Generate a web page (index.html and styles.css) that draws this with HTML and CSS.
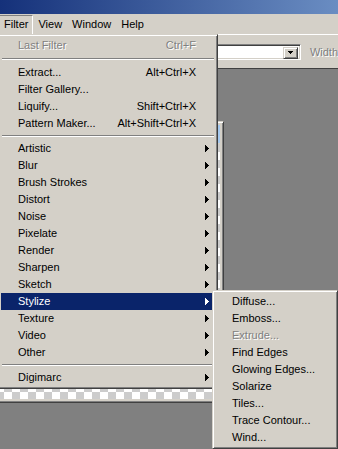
FILE: index.html
```html
<!DOCTYPE html>
<html lang="en">
<head>
  <meta charset="UTF-8">
  <meta name="viewport" content="width=device-width, initial-scale=1.0">
  <title>Filter menu</title>
  <link rel="stylesheet" href="styles.css">
</head>
<body>

  <div class="titlebar"></div>

  <!-- main menu bar -->
  <div class="menubar">
    <span class="mb-item open">Filter</span>
    <span class="mb-item">View</span>
    <span class="mb-item">Window</span>
    <span class="mb-item">Help</span>
  </div>

  <!-- tool options bar -->
  <div class="options">
    <div class="combo">
      <div class="combo-btn">
        <svg width="5" height="3" viewBox="0 0 5 3"><rect x="0" y="0" width="5" height="1"/><rect x="1" y="1" width="3" height="1"/><rect x="2" y="2" width="1" height="1"/></svg>
      </div>
    </div>
    <span class="opt-label">Width</span>
  </div>

  <div class="workspace">
    <div class="docwin">
      <div class="doc-title"></div>
      <div class="doc-canvas"></div>
    </div>
  </div>

  <!-- Filter dropdown -->
  <div class="menu filter-menu">
    <div class="item disabled"><span>Last Filter</span><span class="shortcut">Ctrl+F</span><span class="sub"></span></div>
    <div class="sep first"><div class="line"></div></div>
    <div class="item"><span>Extract...</span><span class="shortcut">Alt+Ctrl+X</span><span class="sub"></span></div>
    <div class="item"><span>Filter Gallery...</span><span class="sub"></span></div>
    <div class="item"><span>Liquify...</span><span class="shortcut">Shift+Ctrl+X</span><span class="sub"></span></div>
    <div class="item"><span>Pattern Maker...</span><span class="shortcut">Alt+Shift+Ctrl+X</span><span class="sub"></span></div>
    <div class="sep"><div class="line"></div></div>
    <div class="item"><span>Artistic</span><span class="sub"><svg class="arrow" width="4" height="7" viewBox="0 0 4 7"><rect x="0" y="0" width="1" height="7"/><rect x="1" y="1" width="1" height="5"/><rect x="2" y="2" width="1" height="3"/><rect x="3" y="3" width="1" height="1"/></svg></span></div>
    <div class="item"><span>Blur</span><span class="sub"><svg class="arrow" width="4" height="7" viewBox="0 0 4 7"><rect x="0" y="0" width="1" height="7"/><rect x="1" y="1" width="1" height="5"/><rect x="2" y="2" width="1" height="3"/><rect x="3" y="3" width="1" height="1"/></svg></span></div>
    <div class="item"><span>Brush Strokes</span><span class="sub"><svg class="arrow" width="4" height="7" viewBox="0 0 4 7"><rect x="0" y="0" width="1" height="7"/><rect x="1" y="1" width="1" height="5"/><rect x="2" y="2" width="1" height="3"/><rect x="3" y="3" width="1" height="1"/></svg></span></div>
    <div class="item"><span>Distort</span><span class="sub"><svg class="arrow" width="4" height="7" viewBox="0 0 4 7"><rect x="0" y="0" width="1" height="7"/><rect x="1" y="1" width="1" height="5"/><rect x="2" y="2" width="1" height="3"/><rect x="3" y="3" width="1" height="1"/></svg></span></div>
    <div class="item"><span>Noise</span><span class="sub"><svg class="arrow" width="4" height="7" viewBox="0 0 4 7"><rect x="0" y="0" width="1" height="7"/><rect x="1" y="1" width="1" height="5"/><rect x="2" y="2" width="1" height="3"/><rect x="3" y="3" width="1" height="1"/></svg></span></div>
    <div class="item"><span>Pixelate</span><span class="sub"><svg class="arrow" width="4" height="7" viewBox="0 0 4 7"><rect x="0" y="0" width="1" height="7"/><rect x="1" y="1" width="1" height="5"/><rect x="2" y="2" width="1" height="3"/><rect x="3" y="3" width="1" height="1"/></svg></span></div>
    <div class="item"><span>Render</span><span class="sub"><svg class="arrow" width="4" height="7" viewBox="0 0 4 7"><rect x="0" y="0" width="1" height="7"/><rect x="1" y="1" width="1" height="5"/><rect x="2" y="2" width="1" height="3"/><rect x="3" y="3" width="1" height="1"/></svg></span></div>
    <div class="item"><span>Sharpen</span><span class="sub"><svg class="arrow" width="4" height="7" viewBox="0 0 4 7"><rect x="0" y="0" width="1" height="7"/><rect x="1" y="1" width="1" height="5"/><rect x="2" y="2" width="1" height="3"/><rect x="3" y="3" width="1" height="1"/></svg></span></div>
    <div class="item"><span>Sketch</span><span class="sub"><svg class="arrow" width="4" height="7" viewBox="0 0 4 7"><rect x="0" y="0" width="1" height="7"/><rect x="1" y="1" width="1" height="5"/><rect x="2" y="2" width="1" height="3"/><rect x="3" y="3" width="1" height="1"/></svg></span></div>
    <div class="item active"><span>Stylize</span><span class="sub"><svg class="arrow" width="4" height="7" viewBox="0 0 4 7"><rect x="0" y="0" width="1" height="7"/><rect x="1" y="1" width="1" height="5"/><rect x="2" y="2" width="1" height="3"/><rect x="3" y="3" width="1" height="1"/></svg></span></div>
    <div class="item"><span>Texture</span><span class="sub"><svg class="arrow" width="4" height="7" viewBox="0 0 4 7"><rect x="0" y="0" width="1" height="7"/><rect x="1" y="1" width="1" height="5"/><rect x="2" y="2" width="1" height="3"/><rect x="3" y="3" width="1" height="1"/></svg></span></div>
    <div class="item"><span>Video</span><span class="sub"><svg class="arrow" width="4" height="7" viewBox="0 0 4 7"><rect x="0" y="0" width="1" height="7"/><rect x="1" y="1" width="1" height="5"/><rect x="2" y="2" width="1" height="3"/><rect x="3" y="3" width="1" height="1"/></svg></span></div>
    <div class="item"><span>Other</span><span class="sub"><svg class="arrow" width="4" height="7" viewBox="0 0 4 7"><rect x="0" y="0" width="1" height="7"/><rect x="1" y="1" width="1" height="5"/><rect x="2" y="2" width="1" height="3"/><rect x="3" y="3" width="1" height="1"/></svg></span></div>
    <div class="sep"><div class="line"></div></div>
    <div class="item"><span>Digimarc</span><span class="sub"><svg class="arrow" width="4" height="7" viewBox="0 0 4 7"><rect x="0" y="0" width="1" height="7"/><rect x="1" y="1" width="1" height="5"/><rect x="2" y="2" width="1" height="3"/><rect x="3" y="3" width="1" height="1"/></svg></span></div>
  </div>

  <!-- Stylize submenu -->
  <div class="menu submenu">
    <div class="item"><span>Diffuse...</span></div>
    <div class="item"><span>Emboss...</span></div>
    <div class="item disabled"><span>Extrude...</span></div>
    <div class="item"><span>Find Edges</span></div>
    <div class="item"><span>Glowing Edges...</span></div>
    <div class="item"><span>Solarize</span></div>
    <div class="item"><span>Tiles...</span></div>
    <div class="item"><span>Trace Contour...</span></div>
    <div class="item"><span>Wind...</span></div>
  </div>

</body>
</html>
```

FILE: styles.css
```css
body {
  margin: 0;
  width: 338px;
  height: 449px;
  overflow: hidden;
  position: relative;
  display: flex;
  flex-direction: column;
  background-color: #808080;
  font-family: "Liberation Sans", Arial, sans-serif;
  font-size: 11px;
  color: #000;
}

.titlebar {
  height: 14px;
  background: linear-gradient(to right, #15317a, #6a8dc2);
}

/* menu bar */
.menubar {
  height: 20px;
  box-sizing: border-box;
  padding-top: 1px;
  display: flex;
  background-color: #d4d0c8;
}
.mb-item {
  height: 18px;
  line-height: 16px;
  padding: 0 4px;
  border: 1px solid transparent;
}
.mb-item:first-child {
  margin-left: -1px;
}
.mb-item.open {
  border-color: #808080 #fff #fff #808080;
}

/* options bar */
.options {
  height: 35px;
  box-sizing: border-box;
  border-top: 1px solid #fff;
  border-bottom: 1px solid #404040;
  background-color: #d4d0c8;
  display: flex;
  align-items: center;
  padding-left: 150px;
}
.combo {
  width: 152px;
  height: 16px;
  box-sizing: border-box;
  border: 1px solid;
  border-color: #808080 #fff #fff #808080;
  box-shadow: inset 1px 1px #404040, inset -1px -1px #d4d0c8;
  background-color: #fff;
  display: flex;
  justify-content: flex-end;
  padding: 2px 2px 2px 0;
}
.combo-btn {
  width: 15px;
  height: 12px;
  box-sizing: border-box;
  border: 1px solid;
  border-color: #d4d0c8 #404040 #404040 #d4d0c8;
  box-shadow: inset 1px 1px #fff, inset -1px -1px #808080;
  background-color: #d4d0c8;
  display: flex;
  align-items: center;
  justify-content: center;
}
.combo-btn svg {
  display: block;
  fill: #000;
}
.opt-label {
  margin-left: 9px;
  color: #808080;
  text-shadow: 1px 1px 0 #fff;
}

/* workspace with a document window */
.workspace {
  flex: 1;
  position: relative;
  background-color: #808080;
}
.docwin {
  position: absolute;
  left: -10px;
  top: 52px;
  width: 234px;
  height: 282px;
  box-sizing: border-box;
  border: 1px solid;
  border-color: #d4d0c8 #404040 #404040 #d4d0c8;
  box-shadow: inset 1px 1px #fff, inset -1px -1px #808080;
  padding: 3px;
  background-color: #d4d0c8;
  display: flex;
  flex-direction: column;
}
.doc-title {
  height: 18px;
  background: linear-gradient(to right, #0a246a, #a6caf0);
}
.doc-canvas {
  flex: 1;
  margin-top: 1px;
  background: repeating-conic-gradient(#ccc 0 25%, #fff 0 50%) 2px 0 / 16px 16px;
}

/* popup menus */
.menu {
  position: absolute;
  box-sizing: border-box;
  border: 1px solid;
  border-color: #d4d0c8 #404040 #404040 #d4d0c8;
  box-shadow: inset 1px 1px #fff, inset -1px -1px #808080;
  padding: 2px;
  background-color: #d4d0c8;
}
.filter-menu {
  left: -2px;
  top: 34px;
  width: 220px;
}
.submenu {
  left: 212px;
  top: 290px;
  width: 126px;
}
.item {
  display: flex;
  height: 17px;
  line-height: 17px;
  padding-left: 17px;
  white-space: nowrap;
}
.item .shortcut {
  margin-left: auto;
}
.item .sub {
  width: 19px;
  margin-left: auto;
  display: flex;
  align-items: center;
}
.item .shortcut + .sub {
  margin-left: 0;
}
.arrow {
  display: block;
  margin-left: 9px;
  fill: currentColor;
}
.item.active {
  background-color: #0a246a;
  color: #fff;
}
.item.disabled {
  color: #808080;
  text-shadow: 1px 1px 0 #fff;
}
.sep {
  height: 8px;
  padding-top: 3px;
  box-sizing: border-box;
}
.sep.first {
  height: 10px;
  padding-top: 4px;
}
.sep .line {
  margin: 0 1px;
  border-top: 1px solid #808080;
  border-bottom: 1px solid #fff;
}
```
